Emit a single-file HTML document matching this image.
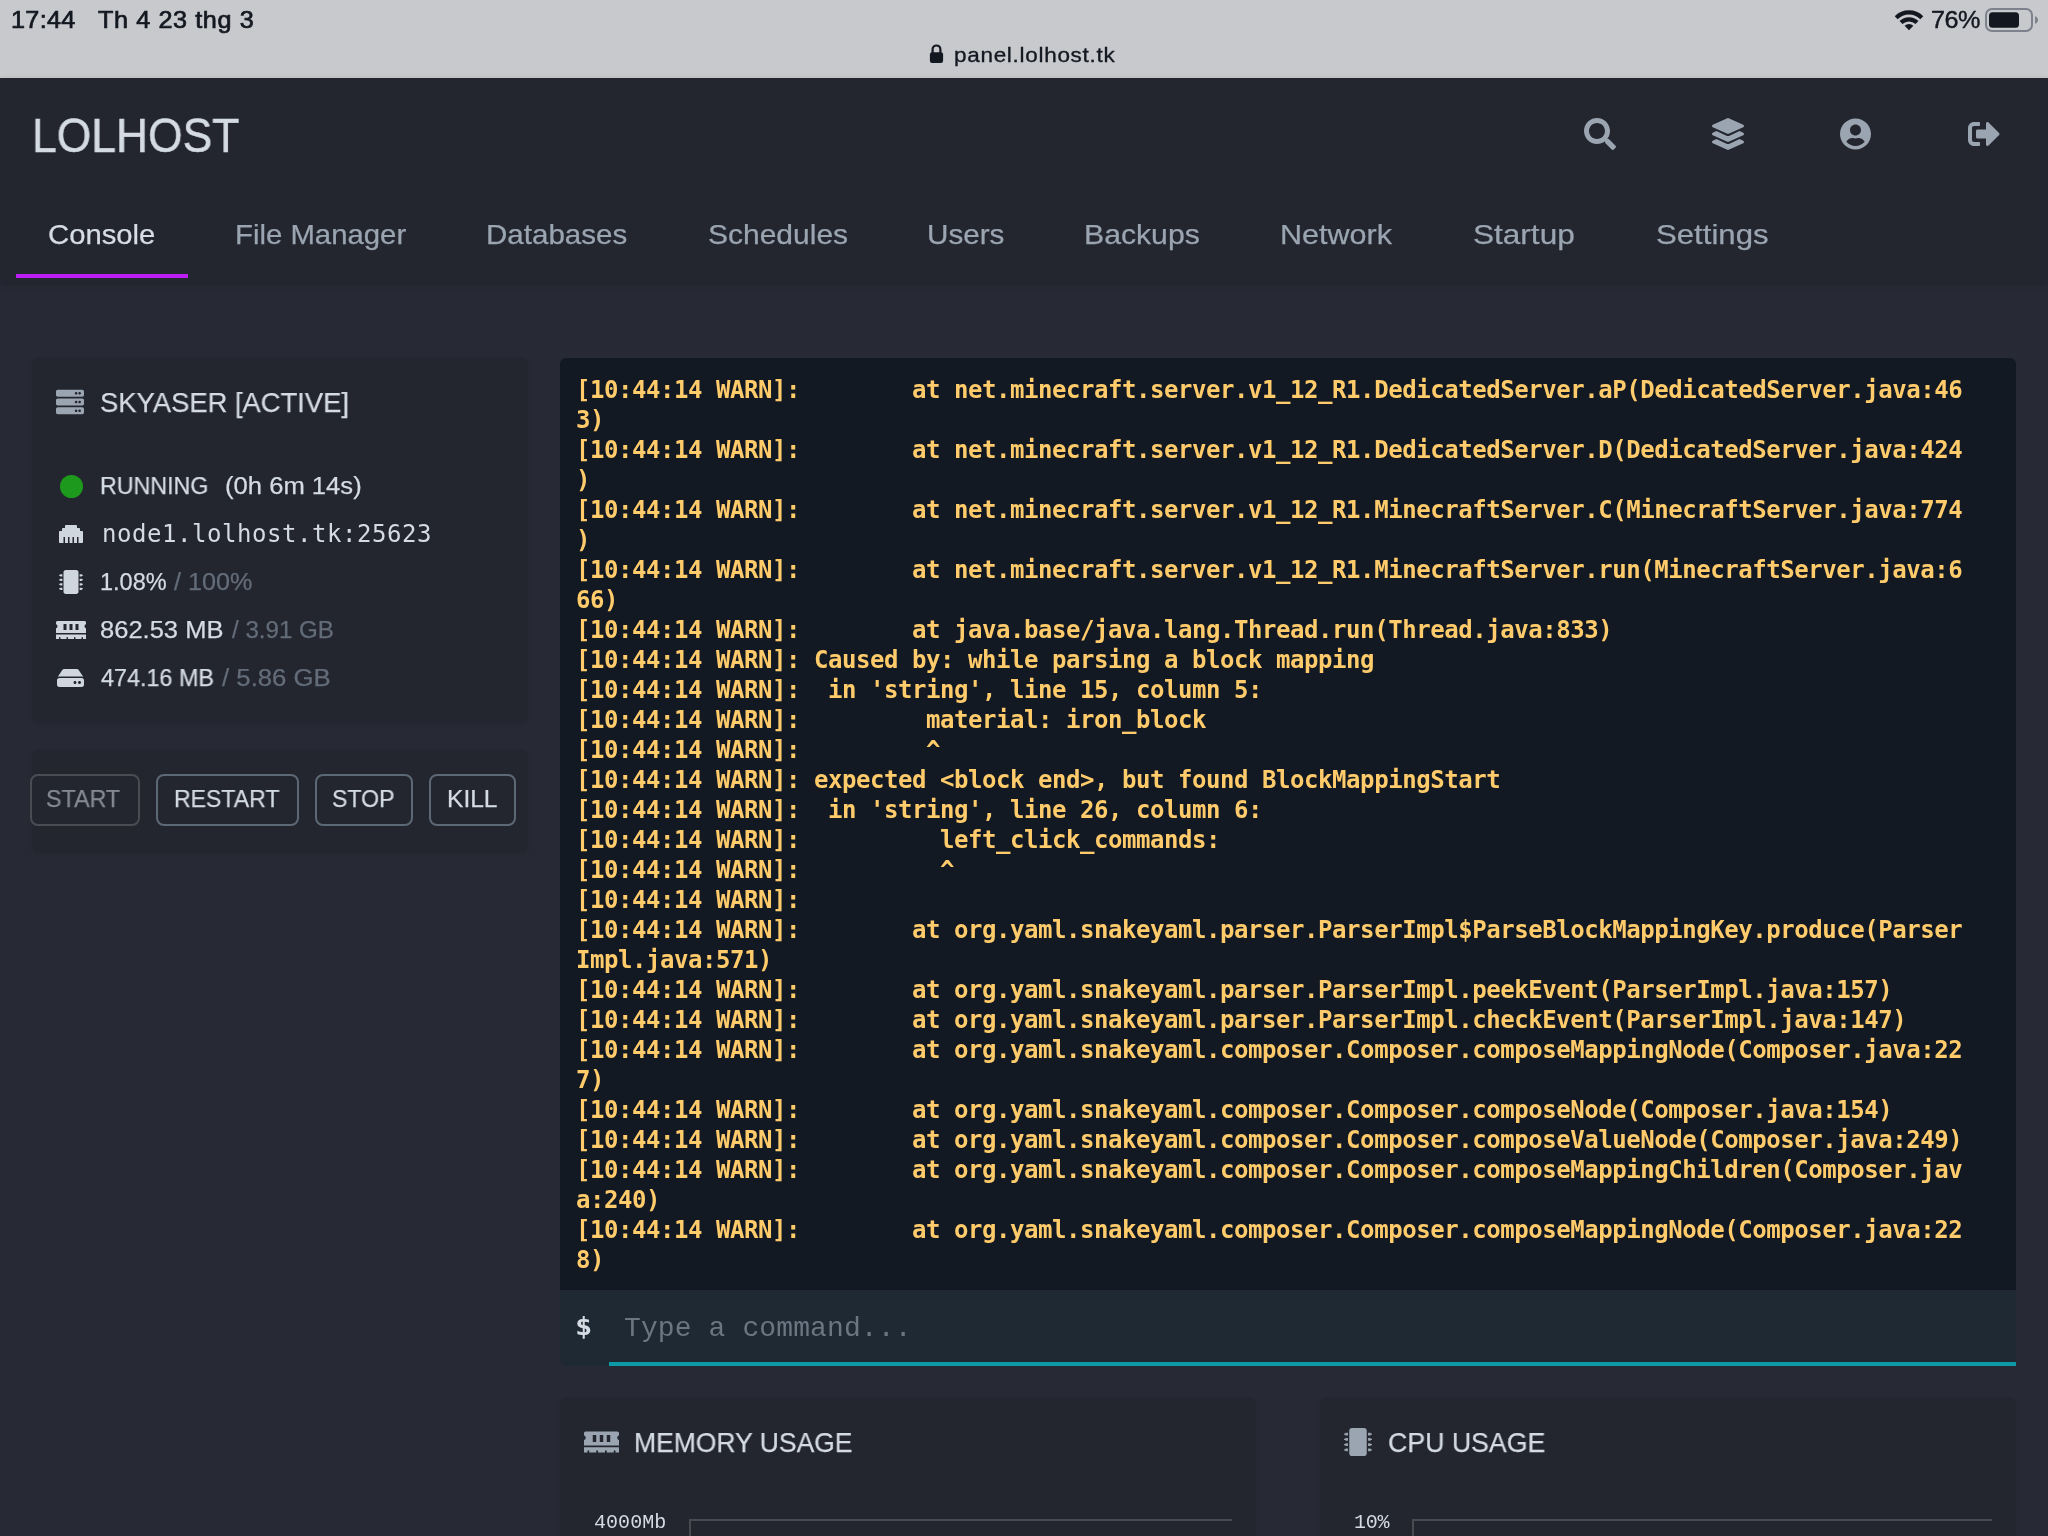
<!DOCTYPE html>
<html lang="vi"><head><meta charset="utf-8"><title>LOLHOST - Console</title><style>
*{margin:0;padding:0;box-sizing:border-box}
html,body{width:2048px;height:1536px;overflow:hidden;background:#272935}
body{position:relative;font-family:"Liberation Sans",sans-serif;-webkit-font-smoothing:antialiased}
.abs,.t,.ic{position:absolute}
h1,h2{font-weight:normal}
a{text-decoration:none}
button{background:none;padding:0;margin:0;font:inherit;color:inherit}
.t{white-space:nowrap;display:block;transform-origin:0 0;will-change:transform}
.sans{font-family:"Liberation Sans",sans-serif}
.dmono{font-family:"DejaVu Sans Mono","Liberation Mono",monospace}
.lmono{font-family:"Liberation Mono",monospace}
#bar{left:0;top:0;width:2048px;height:78px;background:#c8c9cd}
#head{left:0;top:78px;width:2048px;height:204px;background:#23262f;box-shadow:0 2px 6px rgba(0,0,0,.18)}
#tabline{left:16px;top:274px;width:172px;height:4px;background:#bc1ef3}
  .card{background:#23262f;border-radius:6px;box-shadow:0 1px 4px rgba(0,0,0,.10)}
#term{left:560px;top:358px;width:1456px;height:932px;background:#121922;border-radius:6px 6px 0 0;overflow:hidden}
#rows{position:absolute;left:16px;top:17.399999999999977px;font-family:"DejaVu Sans Mono","Liberation Mono",monospace;font-weight:bold;font-size:24px;line-height:30px;letter-spacing:-0.447px;color:#ffcb6b;will-change:transform}
.row{height:30px;white-space:pre}
#cmd{left:560px;top:1290px;width:1456px;height:76px;background:#1f2933;border-radius:0 0 6px 6px}
#cmdline{left:609px;top:1362px;width:1407px;height:4px;background:#0c9aa7}
.btn{position:absolute;top:774px;height:52px;border:2px solid #5d6875;border-radius:8px}
.hl{position:absolute;height:2px;background:#484a52}
.vl{position:absolute;width:2px;background:#484a52}
</style></head><body>
<div id="statusbar">
<div class="abs" id="bar"></div>
<span class="t sans" id="time" style="left:10.60px;top:5.00px;font-size:24px;line-height:30px;letter-spacing:0.310px;transform:scaleX(1.0500);color:#131820;-webkit-text-stroke:0.7px #131820">17:44</span>
<span class="t sans" id="date" style="left:97.50px;top:5.00px;font-size:24px;line-height:30px;letter-spacing:0.571px;transform:scaleX(1.0500);color:#131820;-webkit-text-stroke:0.7px #131820">Th 4 23 thg 3</span>
<svg class="ic" style="left:929px;top:43px" width="15" height="21" viewBox="0 0 15 21"><path fill="none" stroke="#131820" stroke-width="2.2" d="M3.6 10V6.4a3.9 3.9 0 0 1 7.800 0V10"/><rect x="0.9" y="9.200" width="13.2" height="10.800" rx="2.200" fill="#131820"/></svg>
<span class="t sans" id="url" style="left:954.00px;top:42.00px;font-size:21px;line-height:26px;letter-spacing:0.673px;transform:scaleX(1.0700);color:#131820;-webkit-text-stroke:0.35px #131820">panel.lolhost.tk</span>
<svg class="ic" style="left:1894px;top:9px" width="30" height="22" viewBox="0 0 30 22"><g fill="none" stroke="#131820" stroke-width="4.200"><path d="M2.200 8.700A18 18 0 0 1 27.800 8.700"/><path d="M7 13.600A11.300 11.300 0 0 1 23 13.600"/></g><path fill="#131820" d="M15 21.200L10.600 16.800A6.200 6.200 0 0 1 19.400 16.800Z"/></svg>
<span class="t sans" id="batt" style="left:1931.00px;top:5.00px;font-size:24px;line-height:30px;letter-spacing:-0.476px;transform:scaleX(1.0500);color:#131820;-webkit-text-stroke:0.4px #131820">76%</span>
<svg class="ic" style="left:1984px;top:7px" width="56" height="26" viewBox="0 0 56 26"><rect x="2" y="2" width="46" height="22" rx="6" fill="none" stroke="#7d818c" stroke-width="2"/><rect x="5" y="5.200" width="30" height="15.600" rx="3.500" fill="#131820"/><path fill="#7d818c" d="M51 9.200v7.600c2-.6 3-2 3-3.800s-1-3.200-3-3.800z"/></svg>
</div>
<header>
<div class="abs" id="head"></div>
<h1 class="t sans" id="logo" style="left:32.00px;top:105.00px;font-size:48.5px;line-height:61px;letter-spacing:0.000px;transform:scaleX(0.9156);color:#d5dbe3;-webkit-text-stroke:0.5px #d5dbe3">LOLHOST</h1>
<svg class="ic" style="left:1584px;top:118px" width="32" height="32" viewBox="0 0 512 512"><path fill="#9aa5b1" d="M505 442.7L405.3 343c-4.500-4.500-10.600-7-17-7H372c27.600-35.300 44-79.700 44-128C416 93.100 322.900 0 208 0S0 93.100 0 208s93.100 208 208 208c48.300 0 92.700-16.400 128-44v16.300c0 6.400 2.500 12.500 7 17l99.700 99.700c9.400 9.400 24.600 9.400 33.900 0l28.300-28.300c9.400-9.400 9.400-24.600.1-34zM208 336c-70.700 0-128-57.200-128-128 0-70.700 57.200-128 128-128 70.700 0 128 57.200 128 128 0 70.700-57.200 128-128 128z"/></svg>
<svg class="ic" style="left:1712px;top:118px" width="32" height="32" viewBox="0 0 512 512"><path fill="#9aa5b1" d="M12.410 148.020l232.940 105.670c6.800 3.090 14.490 3.090 21.290 0l232.940-105.670c16.550-7.510 16.550-32.520 0-40.030L266.650 2.310a25.607 25.607 0 0 0-21.290 0L12.410 107.980c-16.550 7.510-16.550 32.530 0 40.040zm487.180 88.280l-58.090-26.330-161.640 73.270c-7.560 3.430-15.590 5.170-23.860 5.170s-16.290-1.740-23.860-5.170L70.510 209.970l-58.100 26.330c-16.550 7.500-16.550 32.500 0 40l232.940 105.590c6.800 3.080 14.490 3.080 21.290 0L499.590 276.300c16.550-7.500 16.550-32.500 0-40zm0 127.800l-57.870-26.230-161.860 73.370c-7.560 3.430-15.590 5.170-23.860 5.170s-16.290-1.740-23.860-5.170L70.290 337.870 12.410 364.100c-16.550 7.500-16.550 32.500 0 40l232.940 105.590c6.800 3.080 14.490 3.080 21.290 0L499.590 404.100c16.550-7.500 16.550-32.500 0-40z"/></svg>
<svg class="ic" style="left:1840px;top:118px" width="31" height="32" viewBox="0 0 496 512"><path fill="#9aa5b1" d="M248 8C111 8 0 119 0 256s111 248 248 248 248-111 248-248S385 8 248 8zm0 96c48.600 0 88 39.400 88 88s-39.400 88-88 88-88-39.400-88-88 39.400-88 88-88zm0 344c-58.700 0-111.300-26.600-146.500-68.200 18.800-35.400 55.600-59.800 98.500-59.800 2.400 0 4.800.4 7.100 1.100 13 4.200 26.600 6.900 40.900 6.900 14.300 0 28-2.700 40.900-6.900 2.300-.7 4.700-1.100 7.100-1.100 42.900 0 79.700 24.400 98.500 59.800C359.300 421.400 306.700 448 248 448z"/></svg>
<svg class="ic" style="left:1968px;top:118px" width="32" height="32" viewBox="0 0 512 512"><path fill="#9aa5b1" d="M497 273L329 441c-15 15-41 4.500-41-17v-96H152c-13.300 0-24-10.700-24-24v-96c0-13.300 10.700-24 24-24h136V88c0-21.400 25.900-32 41-17l168 168c9.300 9.400 9.300 24.600 0 34zM192 436v-40c0-6.600-5.400-12-12-12H96c-17.700 0-32-14.300-32-32V160c0-17.700 14.300-32 32-32h84c6.600 0 12-5.400 12-12V76c0-6.600-5.400-12-12-12H96c-53 0-96 43-96 96v192c0 53 43 96 96 96h84c6.600 0 12-5.400 12-12z"/></svg>
<nav>
<div class="abs" id="tabline"></div>
<a href="#" class="t sans" id="tab0" style="left:48.00px;top:217.00px;font-size:28px;line-height:35px;letter-spacing:0.000px;transform:scaleX(1.0454);color:#d7dde5;-webkit-text-stroke:0.25px currentColor">Console</a>
<a href="#" class="t sans" id="tab1" style="left:234.50px;top:217.00px;font-size:28px;line-height:35px;letter-spacing:0.000px;transform:scaleX(1.0476);color:#9aa5b1;-webkit-text-stroke:0.25px currentColor">File Manager</a>
<a href="#" class="t sans" id="tab2" style="left:486.00px;top:217.00px;font-size:28px;line-height:35px;letter-spacing:0.000px;transform:scaleX(1.0548);color:#9aa5b1;-webkit-text-stroke:0.25px currentColor">Databases</a>
<a href="#" class="t sans" id="tab3" style="left:708.00px;top:217.00px;font-size:28px;line-height:35px;letter-spacing:0.000px;transform:scaleX(1.0711);color:#9aa5b1;-webkit-text-stroke:0.25px currentColor">Schedules</a>
<a href="#" class="t sans" id="tab4" style="left:927.00px;top:217.00px;font-size:28px;line-height:35px;letter-spacing:0.000px;transform:scaleX(1.0587);color:#9aa5b1;-webkit-text-stroke:0.25px currentColor">Users</a>
<a href="#" class="t sans" id="tab5" style="left:1084.00px;top:217.00px;font-size:28px;line-height:35px;letter-spacing:0.000px;transform:scaleX(1.0780);color:#9aa5b1;-webkit-text-stroke:0.25px currentColor">Backups</a>
<a href="#" class="t sans" id="tab6" style="left:1280.00px;top:217.00px;font-size:28px;line-height:35px;letter-spacing:0.000px;transform:scaleX(1.0913);color:#9aa5b1;-webkit-text-stroke:0.25px currentColor">Network</a>
<a href="#" class="t sans" id="tab7" style="left:1473.00px;top:217.00px;font-size:28px;line-height:35px;letter-spacing:0.000px;transform:scaleX(1.1269);color:#9aa5b1;-webkit-text-stroke:0.25px currentColor">Startup</a>
<a href="#" class="t sans" id="tab8" style="left:1656.00px;top:217.00px;font-size:28px;line-height:35px;letter-spacing:0.000px;transform:scaleX(1.1126);color:#9aa5b1;-webkit-text-stroke:0.25px currentColor">Settings</a>
</nav>
</header>
<aside>
<section>
<div class="abs card" style="left:32px;top:358px;width:496px;height:364px"></div>
<svg class="ic" style="left:56px;top:388px" width="28" height="28" viewBox="0 0 512 512"><path fill="#9aa5b1" d="M480 160H32c-17.673 0-32-14.327-32-32V64c0-17.673 14.327-32 32-32h448c17.673 0 32 14.327 32 32v64c0 17.673-14.327 32-32 32zm-48-88c-13.255 0-24 10.745-24 24s10.745 24 24 24 24-10.745 24-24-10.745-24-24-24zm-64 0c-13.255 0-24 10.745-24 24s10.745 24 24 24 24-10.745 24-24-10.745-24-24-24zm112 248H32c-17.673 0-32-14.327-32-32v-64c0-17.673 14.327-32 32-32h448c17.673 0 32 14.327 32 32v64c0 17.673-14.327 32-32 32zm-48-88c-13.255 0-24 10.745-24 24s10.745 24 24 24 24-10.745 24-24-10.745-24-24-24zm-64 0c-13.255 0-24 10.745-24 24s10.745 24 24 24 24-10.745 24-24-10.745-24-24-24zm112 248H32c-17.673 0-32-14.327-32-32v-64c0-17.673 14.327-32 32-32h448c17.673 0 32 14.327 32 32v64c0 17.673-14.327 32-32 32zm-48-88c-13.255 0-24 10.745-24 24s10.745 24 24 24 24-10.745 24-24-10.745-24-24-24zm-64 0c-13.255 0-24 10.745-24 24s10.745 24 24 24 24-10.745 24-24-10.745-24-24-24z"/></svg>
<svg class="ic" style="left:59px;top:522px" width="24" height="24" viewBox="0 0 512 512"><path fill="#cfd6de" d="M496 192h-48v-48c0-8.800-7.200-16-16-16h-48V80c0-8.800-7.200-16-16-16H144c-8.800 0-16 7.200-16 16v48H80c-8.800 0-16 7.200-16 16v48H16c-8.800 0-16 7.200-16 16v224c0 8.800 7.200 16 16 16h80V320h32v128h64V320h32v128h64V320h32v128h64V320h32v128h80c8.800 0 16-7.200 16-16V208c0-8.800-7.200-16-16-16z"/></svg>
<svg class="ic" style="left:59px;top:570px" width="24" height="24" viewBox="0 0 512 512"><path fill="#cfd6de" d="M416 48v416c0 26.510-21.490 48-48 48H144c-26.510 0-48-21.490-48-48V48c0-26.510 21.490-48 48-48h224c26.510 0 48 21.490 48 48zm96 58v12a6 6 0 0 1-6 6h-18v6a6 6 0 0 1-6 6h-42V88h42a6 6 0 0 1 6 6v6h18a6 6 0 0 1 6 6zm0 96v12a6 6 0 0 1-6 6h-18v6a6 6 0 0 1-6 6h-42v-48h42a6 6 0 0 1 6 6v6h18a6 6 0 0 1 6 6zm0 96v12a6 6 0 0 1-6 6h-18v6a6 6 0 0 1-6 6h-42v-48h42a6 6 0 0 1 6 6v6h18a6 6 0 0 1 6 6zm0 96v12a6 6 0 0 1-6 6h-18v6a6 6 0 0 1-6 6h-42v-48h42a6 6 0 0 1 6 6v6h18a6 6 0 0 1 6 6zM30 376h42v48H30a6 6 0 0 1-6-6v-6H6a6 6 0 0 1-6-6v-12a6 6 0 0 1 6-6h18v-6a6 6 0 0 1 6-6zm0-96h42v48H30a6 6 0 0 1-6-6v-6H6a6 6 0 0 1-6-6v-12a6 6 0 0 1 6-6h18v-6a6 6 0 0 1 6-6zm0-96h42v48H30a6 6 0 0 1-6-6v-6H6a6 6 0 0 1-6-6v-12a6 6 0 0 1 6-6h18v-6a6 6 0 0 1 6-6zm0-96h42v48H30a6 6 0 0 1-6-6v-6H6a6 6 0 0 1-6-6v-12a6 6 0 0 1 6-6h18v-6a6 6 0 0 1 6-6z"/></svg>
<svg class="ic" style="left:56px;top:618px" width="30" height="24" viewBox="0 0 640 512"><path fill="#cfd6de" d="M640 130.940V96c0-17.670-14.330-32-32-32H32C14.330 64 0 78.330 0 96v34.940c18.600 6.610 32 24.190 32 45.060s-13.400 38.450-32 45.060V320h640v-98.940c-18.600-6.610-32-24.190-32-45.060s13.400-38.450 32-45.060zM224 256h-64V128h64v128zm128 0h-64V128h64v128zm128 0h-64V128h64v128zM0 448h64v-26.670c0-8.840 7.160-16 16-16s16 7.160 16 16V448h128v-26.670c0-8.840 7.160-16 16-16s16 7.160 16 16V448h128v-26.670c0-8.840 7.160-16 16-16s16 7.160 16 16V448h128v-26.670c0-8.840 7.160-16 16-16s16 7.160 16 16V448h64v-96H0v96z"/></svg>
<svg class="ic" style="left:57px;top:666px" width="27" height="24" viewBox="0 0 576 512"><path fill="#cfd6de" d="M576 304v96c0 26.510-21.490 48-48 48H48c-26.510 0-48-21.490-48-48v-96c0-26.510 21.490-48 48-48h480c26.510 0 48 21.490 48 48zm-48-80a79.557 79.557 0 0 1 30.777 6.165L462.250 85.374A48.003 48.003 0 0 0 422.311 64H153.689a48 48 0 0 0-39.938 21.374L17.223 230.165A79.557 79.557 0 0 1 48 224h480zm-48 96c-17.673 0-32 14.327-32 32s14.327 32 32 32 32-14.327 32-32-14.327-32-32-32zm-96 0c-17.673 0-32 14.327-32 32s14.327 32 32 32 32-14.327 32-32-14.327-32-32-32z"/></svg>
<h2 class="t sans" id="ctitle" style="left:100.00px;top:384.00px;font-size:28.5px;line-height:36px;letter-spacing:0.000px;transform:scaleX(0.9607);color:#d5dbe3;-webkit-text-stroke:0.25px currentColor">SKYASER [ACTIVE]</h2>
<div class="abs" style="left:59.5px;top:474.500px;width:23.500px;height:23.500px;border-radius:50%;background:#1d9a1d"></div>
<span class="t sans" id="run" style="left:100.40px;top:472.00px;font-size:23.5px;line-height:29px;letter-spacing:0.000px;transform:scaleX(0.9870);color:#d5dbe3;-webkit-text-stroke:0.25px currentColor">RUNNING</span>
<span class="t sans" id="run2" style="left:224.80px;top:472.00px;font-size:23.5px;line-height:29px;letter-spacing:0.000px;transform:scaleX(1.0900);color:#d5dbe3;-webkit-text-stroke:0.25px currentColor">(0h 6m 14s)</span>
<span class="t dmono" id="addr" style="left:101.50px;top:519.00px;font-size:24px;line-height:30px;letter-spacing:0.548px;transform:scaleX(1.0000);color:#d5dbe3">node1.lolhost.tk:25623</span>
<span class="t sans" id="cpu" style="left:99.50px;top:568.00px;font-size:23.5px;line-height:29px;letter-spacing:0.000px;transform:scaleX(0.9981);color:#d5dbe3;-webkit-text-stroke:0.25px currentColor">1.08%</span>
<span class="t sans" id="cpu2" style="left:173.50px;top:568.00px;font-size:23.5px;line-height:29px;letter-spacing:0.000px;transform:scaleX(1.0721);color:#636c79;-webkit-text-stroke:0.25px currentColor">/ 100%</span>
<span class="t sans" id="mem" style="left:100.00px;top:616.00px;font-size:23.5px;line-height:29px;letter-spacing:0.000px;transform:scaleX(1.0857);color:#d5dbe3;-webkit-text-stroke:0.25px currentColor">862.53 MB</span>
<span class="t sans" id="mem2" style="left:231.50px;top:616.00px;font-size:23.5px;line-height:29px;letter-spacing:0.000px;transform:scaleX(1.0269);color:#636c79;-webkit-text-stroke:0.25px currentColor">/ 3.91 GB</span>
<span class="t sans" id="disk" style="left:101.00px;top:664.00px;font-size:23.5px;line-height:29px;letter-spacing:0.000px;transform:scaleX(0.9934);color:#d5dbe3;-webkit-text-stroke:0.25px currentColor">474.16 MB</span>
<span class="t sans" id="disk2" style="left:222.00px;top:664.00px;font-size:23.5px;line-height:29px;letter-spacing:0.000px;transform:scaleX(1.0958);color:#636c79;-webkit-text-stroke:0.25px currentColor">/ 5.86 GB</span>
</section>
<section>
<div class="abs card" style="left:32px;top:750px;width:496px;height:102px"></div>
<button type="button" class="btn" disabled style="left:30px;width:110px;border-color:#6a6c70;opacity:.55"><span class="t sans" id="b0" style="left:14.00px;top:8.00px;font-size:24px;line-height:30px;letter-spacing:0.000px;transform:scaleX(0.9688);color:#d5dbe3;-webkit-text-stroke:0.25px currentColor">START</span></button>
<button type="button" class="btn" style="left:156px;width:143px"><span class="t sans" id="b1" style="left:16.30px;top:8.00px;font-size:24px;line-height:30px;letter-spacing:0.000px;transform:scaleX(0.9602);color:#d5dbe3;-webkit-text-stroke:0.25px currentColor">RESTART</span></button>
<button type="button" class="btn" style="left:315px;width:98px"><span class="t sans" id="b2" style="left:14.60px;top:8.00px;font-size:24px;line-height:30px;letter-spacing:0.000px;transform:scaleX(0.9619);color:#d5dbe3;-webkit-text-stroke:0.25px currentColor">STOP</span></button>
<button type="button" class="btn" style="left:429px;width:87px"><span class="t sans" id="b3" style="left:16.30px;top:8.00px;font-size:24px;line-height:30px;letter-spacing:0.000px;transform:scaleX(1.0235);color:#d5dbe3;-webkit-text-stroke:0.25px currentColor">KILL</span></button>
</section>
</aside>
<main>
<div class="abs" id="term"><div id="rows"><div class="row">[10:44:14 WARN]:        at net.minecraft.server.v1_12_R1.DedicatedServer.aP(DedicatedServer.java:46</div><div class="row">3)</div><div class="row">[10:44:14 WARN]:        at net.minecraft.server.v1_12_R1.DedicatedServer.D(DedicatedServer.java:424</div><div class="row">)</div><div class="row">[10:44:14 WARN]:        at net.minecraft.server.v1_12_R1.MinecraftServer.C(MinecraftServer.java:774</div><div class="row">)</div><div class="row">[10:44:14 WARN]:        at net.minecraft.server.v1_12_R1.MinecraftServer.run(MinecraftServer.java:6</div><div class="row">66)</div><div class="row">[10:44:14 WARN]:        at java.base/java.lang.Thread.run(Thread.java:833)</div><div class="row">[10:44:14 WARN]: Caused by: while parsing a block mapping</div><div class="row">[10:44:14 WARN]:  in &#x27;string&#x27;, line 15, column 5:</div><div class="row">[10:44:14 WARN]:         material: iron_block</div><div class="row">[10:44:14 WARN]:         ^</div><div class="row">[10:44:14 WARN]: expected &lt;block end&gt;, but found BlockMappingStart</div><div class="row">[10:44:14 WARN]:  in &#x27;string&#x27;, line 26, column 6:</div><div class="row">[10:44:14 WARN]:          left_click_commands:</div><div class="row">[10:44:14 WARN]:          ^</div><div class="row">[10:44:14 WARN]:</div><div class="row">[10:44:14 WARN]:        at org.yaml.snakeyaml.parser.ParserImpl$ParseBlockMappingKey.produce(Parser</div><div class="row">Impl.java:571)</div><div class="row">[10:44:14 WARN]:        at org.yaml.snakeyaml.parser.ParserImpl.peekEvent(ParserImpl.java:157)</div><div class="row">[10:44:14 WARN]:        at org.yaml.snakeyaml.parser.ParserImpl.checkEvent(ParserImpl.java:147)</div><div class="row">[10:44:14 WARN]:        at org.yaml.snakeyaml.composer.Composer.composeMappingNode(Composer.java:22</div><div class="row">7)</div><div class="row">[10:44:14 WARN]:        at org.yaml.snakeyaml.composer.Composer.composeNode(Composer.java:154)</div><div class="row">[10:44:14 WARN]:        at org.yaml.snakeyaml.composer.Composer.composeValueNode(Composer.java:249)</div><div class="row">[10:44:14 WARN]:        at org.yaml.snakeyaml.composer.Composer.composeMappingChildren(Composer.jav</div><div class="row">a:240)</div><div class="row">[10:44:14 WARN]:        at org.yaml.snakeyaml.composer.Composer.composeMappingNode(Composer.java:22</div><div class="row">8)</div></div></div>
<div class="abs" id="cmd"></div>
<div class="abs" id="cmdline"></div>
<span class="t dmono" id="dollar" style="left:574.60px;top:1311.00px;font-size:25px;line-height:31px;letter-spacing:0.000px;transform:scaleX(1.1470);color:#d5dbe3;font-weight:bold">$</span>
<span class="t lmono" id="ph" style="left:624.00px;top:1311.00px;font-size:28px;line-height:35px;letter-spacing:0.113px;transform:scaleX(1.0000);color:#6b7682">Type a command...</span>
<section>
<div class="abs card" style="left:560px;top:1398px;width:696px;height:200px"></div>
<svg class="ic" style="left:584px;top:1428px" width="35" height="28" viewBox="0 0 640 512"><path fill="#9aa5b1" d="M640 130.940V96c0-17.670-14.330-32-32-32H32C14.330 64 0 78.330 0 96v34.940c18.600 6.610 32 24.190 32 45.060s-13.400 38.450-32 45.060V320h640v-98.940c-18.600-6.610-32-24.190-32-45.060s13.400-38.450 32-45.060zM224 256h-64V128h64v128zm128 0h-64V128h64v128zm128 0h-64V128h64v128zM0 448h64v-26.670c0-8.840 7.160-16 16-16s16 7.160 16 16V448h128v-26.670c0-8.840 7.160-16 16-16s16 7.160 16 16V448h128v-26.670c0-8.840 7.160-16 16-16s16 7.160 16 16V448h128v-26.670c0-8.840 7.160-16 16-16s16 7.160 16 16V448h64v-96H0v96z"/></svg>
<h2 class="t sans" id="mtitle" style="left:633.60px;top:1425.00px;font-size:28px;line-height:35px;letter-spacing:0.000px;transform:scaleX(0.9469);color:#d5dbe3;-webkit-text-stroke:0.25px currentColor">MEMORY USAGE</h2>
<span class="t lmono" id="mlab" style="left:593.50px;top:1510.00px;font-size:20px;line-height:25px;letter-spacing:0.040px;transform:scaleX(1.0000);color:#d5dbe3">4000Mb</span>
<div class="hl" style="left:689px;top:1519px;width:543px"></div><div class="vl" style="left:689px;top:1519px;height:30px"></div>
</section>
<section>
<div class="abs card" style="left:1320px;top:1398px;width:696px;height:200px"></div>
<svg class="ic" style="left:1344px;top:1428px" width="28" height="28" viewBox="0 0 512 512"><path fill="#9aa5b1" d="M416 48v416c0 26.510-21.490 48-48 48H144c-26.510 0-48-21.490-48-48V48c0-26.510 21.490-48 48-48h224c26.510 0 48 21.490 48 48zm96 58v12a6 6 0 0 1-6 6h-18v6a6 6 0 0 1-6 6h-42V88h42a6 6 0 0 1 6 6v6h18a6 6 0 0 1 6 6zm0 96v12a6 6 0 0 1-6 6h-18v6a6 6 0 0 1-6 6h-42v-48h42a6 6 0 0 1 6 6v6h18a6 6 0 0 1 6 6zm0 96v12a6 6 0 0 1-6 6h-18v6a6 6 0 0 1-6 6h-42v-48h42a6 6 0 0 1 6 6v6h18a6 6 0 0 1 6 6zm0 96v12a6 6 0 0 1-6 6h-18v6a6 6 0 0 1-6 6h-42v-48h42a6 6 0 0 1 6 6v6h18a6 6 0 0 1 6 6zM30 376h42v48H30a6 6 0 0 1-6-6v-6H6a6 6 0 0 1-6-6v-12a6 6 0 0 1 6-6h18v-6a6 6 0 0 1 6-6zm0-96h42v48H30a6 6 0 0 1-6-6v-6H6a6 6 0 0 1-6-6v-12a6 6 0 0 1 6-6h18v-6a6 6 0 0 1 6-6zm0-96h42v48H30a6 6 0 0 1-6-6v-6H6a6 6 0 0 1-6-6v-12a6 6 0 0 1 6-6h18v-6a6 6 0 0 1 6-6zm0-96h42v48H30a6 6 0 0 1-6-6v-6H6a6 6 0 0 1-6-6v-12a6 6 0 0 1 6-6h18v-6a6 6 0 0 1 6-6z"/></svg>
<h2 class="t sans" id="ptitle" style="left:1388.00px;top:1425.00px;font-size:28px;line-height:35px;letter-spacing:0.000px;transform:scaleX(0.9539);color:#d5dbe3;-webkit-text-stroke:0.25px currentColor">CPU USAGE</h2>
<span class="t lmono" id="plab" style="left:1353.50px;top:1510.00px;font-size:20px;line-height:25px;letter-spacing:-0.200px;transform:scaleX(1.0000);color:#d5dbe3">10%</span>
<div class="hl" style="left:1412px;top:1519px;width:580px"></div><div class="vl" style="left:1412px;top:1519px;height:30px"></div>
</section>
</main>
</body></html>
